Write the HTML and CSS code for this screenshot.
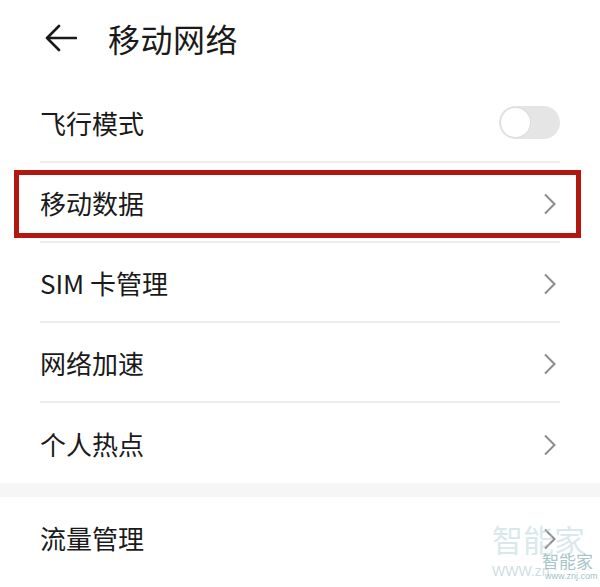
FILE: index.html
```html
<!DOCTYPE html>
<html lang="zh-CN">

<head>
    <meta charset="UTF-8">
    <meta name="viewport" content="width=device-width, initial-scale=1.0">
    <title>移动网络</title>
    <link rel="stylesheet" href="styles.css">
</head>

<body>

    <div class="page">
        <div class="header">
            <svg class="back" width="32" height="28" viewBox="0 0 32 28">
                <path d="M14 2 L2 14 L14 26 M2 14 H31" fill="none" stroke="#1a1a1a" stroke-width="2.6" stroke-linecap="round" stroke-linejoin="round"/>
            </svg>
            <h1 class="title">移动网络</h1>
        </div>

        <div class="group">
            <div class="row">
                <span class="label">飞行模式</span>
                <span class="switch"><span class="knob"></span></span>
            </div>
            <div class="row highlight">
                <span class="label">移动数据</span>
                <svg class="chevron" width="14" height="22" viewBox="0 0 14 22"><path d="M2 1.5 L11.5 11 L2 20.5" fill="none" stroke="#8c8c8c" stroke-width="2"/></svg>
            </div>
            <div class="row">
                <span class="label">SIM 卡管理</span>
                <svg class="chevron" width="14" height="22" viewBox="0 0 14 22"><path d="M2 1.5 L11.5 11 L2 20.5" fill="none" stroke="#8c8c8c" stroke-width="2"/></svg>
            </div>
            <div class="row">
                <span class="label">网络加速</span>
                <svg class="chevron" width="14" height="22" viewBox="0 0 14 22"><path d="M2 1.5 L11.5 11 L2 20.5" fill="none" stroke="#8c8c8c" stroke-width="2"/></svg>
            </div>
            <div class="row last">
                <span class="label">个人热点</span>
                <svg class="chevron" width="14" height="22" viewBox="0 0 14 22"><path d="M2 1.5 L11.5 11 L2 20.5" fill="none" stroke="#8c8c8c" stroke-width="2"/></svg>
            </div>
        </div>

        <div class="spacer"></div>

        <div class="group">
            <div class="row last">
                <span class="label">流量管理</span>
                <svg class="chevron" width="14" height="22" viewBox="0 0 14 22"><path d="M2 1.5 L11.5 11 L2 20.5" fill="none" stroke="#8c8c8c" stroke-width="2"/></svg>
            </div>
        </div>

        <div class="watermark">
            <span class="wm-big">智能家</span>
            <span class="wm-url">WWW.zn</span>
            <span class="wm-small">智能家</span>
            <span class="wm-small-url">www.znj.com</span>
        </div>
    </div>

</body>

</html>
```

FILE: styles.css
```css
/* Reset */
* {
    box-sizing: border-box;
    margin: 0;
    padding: 0;
}

body {
    background-color: #fff;
    font-family: "Noto Sans CJK SC", "Noto Sans", sans-serif;
    color: #1a1a1a;
}

.page {
    position: relative;
    width: 600px;
    height: 587px;
    overflow: hidden;
}

/* Header */
.header {
    height: 83px;
    display: flex;
    align-items: center;
    padding-left: 45px;
    padding-bottom: 8px;
}

.back {
    display: block;
    margin-right: 31px;
}

.title {
    font-size: 32px;
    font-weight: 400;
    letter-spacing: 0.5px;
    line-height: 1;
}

/* List rows */
.group {
    padding: 0 40px;
}

.row {
    position: relative;
    height: 80px;
    display: flex;
    align-items: center;
    justify-content: space-between;
    border-bottom: 2px solid #ececec;
    padding-top: 2px;
}

.row.last {
    border-bottom: none;
}

.label {
    font-size: 26px;
    line-height: 1;
}

.chevron {
    display: block;
    margin-right: 3px;
    margin-top: 2px;
}

/* Switch */
.switch {
    position: relative;
    width: 61px;
    height: 33px;
    border-radius: 17px;
    background-color: #e5e5e5;
    margin-top: -2px;
}

.knob {
    position: absolute;
    left: 2px;
    top: 2px;
    width: 29px;
    height: 29px;
    border-radius: 50%;
    background-color: #fff;
    box-shadow: 0 0 0 1px #dcdcdc;
}

/* Red annotation frame */
.highlight::after {
    content: "";
    position: absolute;
    top: 7px;
    bottom: 3px;
    left: -26px;
    right: -21px;
    border: 5px solid #b3170f;
}

.spacer {
    height: 14px;
    background-color: #f6f6f6;
}

/* Watermark */
.watermark {
    position: absolute;
    left: 490px;
    top: 522px;
    width: 110px;
    height: 65px;
    pointer-events: none;
}

.wm-big {
    position: absolute;
    left: 2px;
    top: 0;
    font-size: 31px;
    line-height: 1.1;
    color: rgba(170, 205, 210, 0.45);
}

.wm-url {
    position: absolute;
    left: 2px;
    top: 41px;
    font-family: "Liberation Sans", sans-serif;
    font-size: 14px;
    color: rgba(170, 200, 205, 0.6);
}

.wm-small {
    position: absolute;
    left: 52px;
    top: 30px;
    font-size: 17px;
    line-height: 1;
    color: rgba(110, 165, 170, 0.65);
}

.wm-small-url {
    position: absolute;
    left: 55px;
    top: 49px;
    font-family: "Liberation Sans", sans-serif;
    font-size: 9px;
    color: rgba(110, 165, 170, 0.7);
}
```
